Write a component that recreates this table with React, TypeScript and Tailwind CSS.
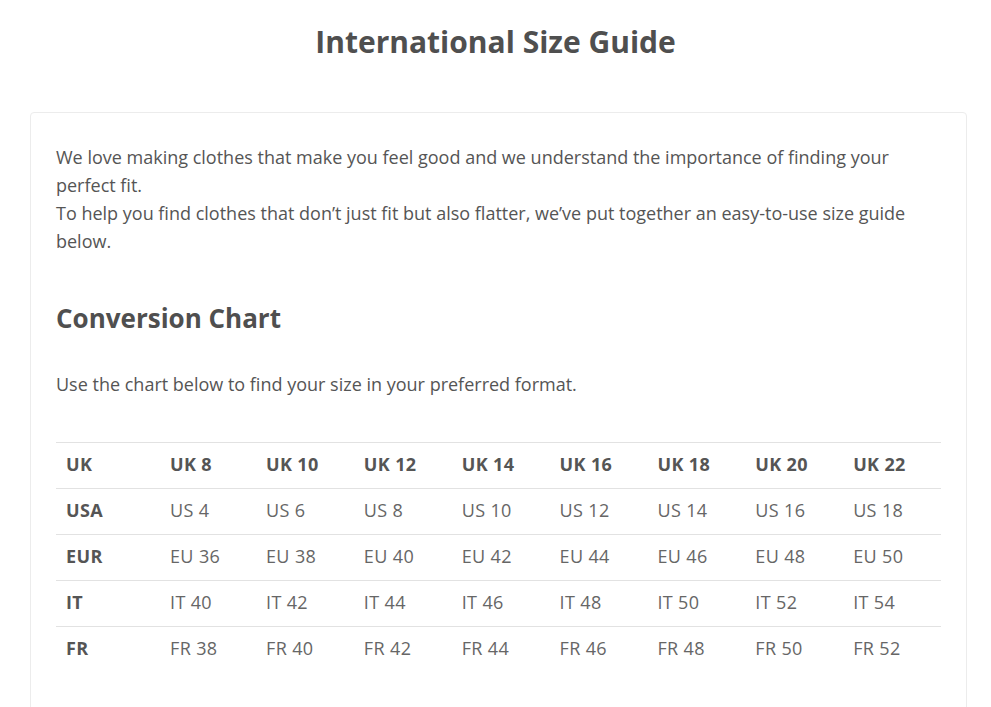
const rows: string[][] = [
  ["UK", "UK 8", "UK 10", "UK 12", "UK 14", "UK 16", "UK 18", "UK 20", "UK 22"],
  ["USA", "US 4", "US 6", "US 8", "US 10", "US 12", "US 14", "US 16", "US 18"],
  ["EUR", "EU 36", "EU 38", "EU 40", "EU 42", "EU 44", "EU 46", "EU 48", "EU 50"],
  ["IT", "IT 40", "IT 42", "IT 44", "IT 46", "IT 48", "IT 50", "IT 52", "IT 54"],
  ["FR", "FR 38", "FR 40", "FR 42", "FR 44", "FR 46", "FR 48", "FR 50", "FR 52"],
];

export default function App() {
  return (
    <div className="min-h-[707px] bg-white text-[#555] font-['Open_Sans','Noto_Sans',sans-serif]">
      <h1 className="pt-[20px] text-center text-[30px] leading-[44px] font-bold text-[#4f4f4f]">
        International Size Guide
      </h1>
      <div className="ml-[30px] mr-[24px] mt-[48px] rounded border border-[#ececec] px-[25px] pt-[30px] pb-10">
        <p className="text-[18px] leading-[28px]">
          We love making clothes that make you feel good and we understand the importance of finding your perfect fit.
          <br />
          To help you find clothes that don’t just fit but also flatter, we’ve put together an easy-to-use size guide below.
        </p>
        <h2 className="mt-[45px] text-[26px] leading-[36px] font-bold text-[#4f4f4f]">Conversion Chart</h2>
        <p className="mt-[34px] text-[18px] leading-[28px]">
          Use the chart below to find your size in your preferred format.
        </p>
        <div className="mt-[44px]">
          {rows.map((row, i) => (
            <div
              key={i}
              className="grid grid-cols-[104px_96px_repeat(7,1fr)] h-[46px] items-center border-t border-[#e2e2e2] text-[18px] tracking-[0.02em]"
            >
              {row.map((cell, j) => (
                <div
                  key={j}
                  className={
                    "pl-[10px] pb-[2px] " +
                    (i === 0 || j === 0 ? "font-bold text-[#555]" : "text-[#666]")
                  }
                >
                  {cell}
                </div>
              ))}
            </div>
          ))}
        </div>
      </div>
    </div>
  );
}
